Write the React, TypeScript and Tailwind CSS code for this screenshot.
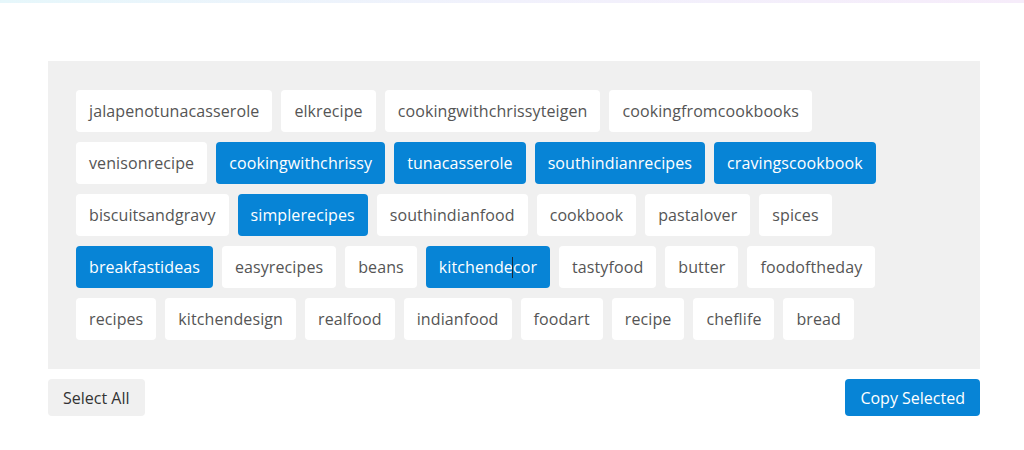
import React, { useState } from 'react';

const rows: string[][] = [
    ['jalapenotunacasserole', 'elkrecipe', 'cookingwithchrissyteigen', 'cookingfromcookbooks'],
    ['venisonrecipe', 'cookingwithchrissy', 'tunacasserole', 'southindianrecipes', 'cravingscookbook'],
    ['biscuitsandgravy', 'simplerecipes', 'southindianfood', 'cookbook', 'pastalover', 'spices'],
    ['breakfastideas', 'easyrecipes', 'beans', 'kitchendecor', 'tastyfood', 'butter', 'foodoftheday'],
    ['recipes', 'kitchendesign', 'realfood', 'indianfood', 'foodart', 'recipe', 'cheflife', 'bread'],
];

const initialSelected = ['cookingwithchrissy', 'tunacasserole', 'southindianrecipes', 'cravingscookbook', 'simplerecipes', 'breakfastideas', 'kitchendecor'];

const App: React.FC = () => {
    const [selected, setSelected] = useState<string[]>(initialSelected);

    const toggle = (tag: string) => {
        setSelected(selected.includes(tag) ? selected.filter((t) => t !== tag) : [...selected, tag]);
    };

    return (
        <div className="min-h-[450px] bg-white" style={{ fontFamily: '"Open Sans", "Liberation Sans", sans-serif' }}>
            <div className="h-[3px] bg-gradient-to-r from-[#e6f7fb] via-[#f1f1fc] to-[#f6ecfa]" />
            <div className="ml-[48px] w-[932px] pt-[58px]">
                <div className="bg-[#f0f0f0] px-[28px] pt-[29px] pb-[29px] flex flex-col gap-[10px]">
                    {rows.map((row, i) => (
                        <div key={i} className="flex gap-[9px]">
                            {row.map((tag) => {
                                const on = selected.includes(tag);
                                return (
                                    <button
                                        key={tag}
                                        onClick={() => toggle(tag)}
                                        className={`relative h-[42px] px-[13px] rounded-[4px] text-[16px] tracking-[0.1px] ${on ? 'bg-[#0784d6] text-white' : 'bg-white text-[#555555]'}`}
                                    >
                                        {tag}
                                        {tag === 'kitchendecor' && (
                                            <span className="absolute left-[86px] top-[11px] h-[21px] w-px bg-[#1a2a3a]" />
                                        )}
                                    </button>
                                );
                            })}
                        </div>
                    ))}
                </div>
                <div className="mt-[10px] flex justify-between">
                    <button onClick={() => setSelected(rows.flat())} className="h-[37px] px-[15px] rounded-[4px] bg-[#f0f0f0] text-[#333333] text-[16px]">
                        Select All
                    </button>
                    <button className="h-[37px] px-[15px] rounded-[4px] bg-[#0784d6] text-white text-[16px]">
                        Copy Selected
                    </button>
                </div>
            </div>
        </div>
    );
};

export default App;
